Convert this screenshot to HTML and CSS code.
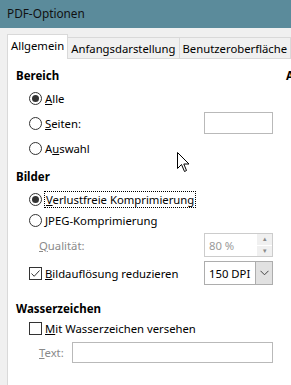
FILE: index.html
```html
<!DOCTYPE html>
<html lang="de">

<head>
    <meta charset="UTF-8">
    <meta name="viewport" content="width=device-width, initial-scale=1.0">
    <title>PDF-Optionen</title>
    <link rel="stylesheet" href="styles.css">
</head>

<body>
    <div class="window">
        <header class="titlebar">PDF-Optionen</header>

        <nav class="tabs">
            <div class="tab active">Allgemein</div>
            <div class="tab">Anfangsdarstellung</div>
            <div class="tab">Benutzeroberfläche</div>
            <div class="tab">Verknüpfungen</div>
        </nav>

        <main class="panel">
            <section class="col">
                <h2 class="heading">Bereich</h2>
                <div class="row r-alle">
                    <label class="opt"><span class="radio on"></span><span><u>A</u>lle</span></label>
                </div>
                <div class="row r-seiten">
                    <label class="opt"><span class="radio"></span><span><u>S</u>eiten:</span></label>
                    <div class="field"></div>
                </div>
                <div class="row r-auswahl">
                    <label class="opt"><span class="radio"></span><span>A<u>u</u>swahl</span></label>
                </div>

                <h2 class="heading h-bilder">Bilder</h2>
                <div class="row r-verlust">
                    <label class="opt"><span class="radio on"></span><span class="focus"><u>V</u>erlustfreie Komprimierung</span></label>
                </div>
                <div class="row r-jpeg">
                    <label class="opt"><span class="radio"></span><span><u>J</u>PEG-Komprimierung</span></label>
                </div>
                <div class="row r-qual">
                    <span class="sub disabled"><u>Q</u>ualität:</span>
                    <div class="field spin">
                        <span class="value">80 %</span>
                        <span class="spin-btns">
                            <span class="spin-btn">&#9652;</span>
                            <span class="spin-btn">&#9662;</span>
                        </span>
                    </div>
                </div>
                <div class="row r-aufl">
                    <label class="opt"><span class="check on">
                        <svg width="11" height="11" viewBox="0 0 11 11"><path d="M1.5 5.5 L4.2 8.3 L9.5 2.5" fill="none" stroke="#333" stroke-width="1"/></svg>
                    </span><span><u>B</u>ildauflösung reduzieren</span></label>
                    <div class="field combo">
                        <span class="value">150 DPI</span>
                        <span class="drop">
                            <svg width="9" height="6" viewBox="0 0 9 6"><path d="M0.5 0.8 L4.5 4.8 L8.5 0.8" fill="none" stroke="#444" stroke-width="1"/></svg>
                        </span>
                    </div>
                </div>

                <h2 class="heading h-wasser">Wasserzeichen</h2>
                <div class="row r-mit">
                    <label class="opt"><span class="check"></span><span><u>M</u>it Wasserzeichen versehen</span></label>
                </div>
                <div class="row r-text">
                    <span class="sub disabled"><u>T</u>ext:</span>
                    <div class="field wide"></div>
                </div>
            </section>

            <section class="col col2">
                <h2 class="heading">Allgemein</h2>
            </section>
        </main>

        <!-- mouse pointer in the screenshot -->
        <svg class="cursor" width="13" height="21" viewBox="0 0 13 21">
            <path d="M0.5 0.5 L0.5 16.5 L4.5 12.5 L7.5 19.5 L9.5 18.5 L6.8 12 L12 12 Z" fill="#fff" stroke="#000" stroke-width="1"/>
        </svg>
    </div>
</body>

</html>
```

FILE: styles.css
```css
body {
    margin: 0;
    padding: 0;
    background-color: #f0f0f0;
    font-family: "Noto Sans", "Open Sans", sans-serif;
    font-size: 11.3px;
    color: #000;
    overflow: hidden;
}

.window {
    position: relative;
    width: 291px;
    height: 385px;
    overflow: hidden;
}

.titlebar {
    height: 28px;
    line-height: 26px;
    padding-left: 7px;
    font-size: 11.8px;
    background-color: #5b8b9b;
    color: #111;
}

.tabs {
    display: flex;
    align-items: flex-end;
    height: 30px;
    padding-left: 7px;
    white-space: nowrap;
}

.tab {
    height: 20px;
    line-height: 22px;
    padding: 0 3px;
    border: 1px solid #d9d9d9;
    border-bottom: none;
    margin-left: -1px;
    background-color: #f0f0f0;
}

.tab.active {
    height: 24px;
    line-height: 22px;
    margin-left: 0;
    margin-bottom: -1px;
    background-color: #fff;
    position: relative;
    z-index: 1;
}

.panel {
    display: grid;
    grid-template-columns: 278px 200px;
    margin-left: 7px;
    height: 330px;
    background-color: #fff;
    border-top: 1px solid #d9d9d9;
    border-left: 1px solid #d9d9d9;
    white-space: nowrap;
}

.col {
    display: flex;
    flex-direction: column;
    padding: 7px 13px 0 8px;
}

.col2 {
    padding-left: 0;
}

.heading {
    margin: 0;
    height: 20px;
    line-height: 20px;
    font-size: 11.5px;
    font-weight: bold;
}

.h-bilder {
    margin-top: 7px;
    height: 21px;
}

.h-wasser {
    margin-top: 14px;
}

.row {
    display: flex;
    align-items: center;
    justify-content: space-between;
    padding-left: 13px;
}

.r-alle { height: 24px; }
.r-seiten { height: 26px; }
.r-auswahl { height: 24px; }
.r-verlust { height: 22px; }
.r-jpeg { height: 20px; }
.r-qual { height: 30px; }
.r-aufl { height: 24px; margin-top: 1px; }
.r-mit { height: 20px; margin-top: -1px; }
.r-text { height: 21px; margin-top: 4px; }

.opt {
    display: flex;
    align-items: center;
    gap: 3px;
}

.radio {
    width: 11px;
    height: 11px;
    border: 1px solid #333;
    border-radius: 50%;
    background-color: #fff;
    position: relative;
}

.radio.on::after {
    content: "";
    position: absolute;
    left: 2px;
    top: 2px;
    width: 7px;
    height: 7px;
    border-radius: 50%;
    background-color: #333;
}

.check {
    width: 11px;
    height: 11px;
    border: 1px solid #333;
    background-color: #fff;
    display: flex;
}

.focus {
    outline: 1px dotted #000;
    outline-offset: 0;
    padding: 0 1px;
}

.sub {
    padding-left: 10px;
}

.disabled {
    color: #8a8a8a;
}

.field {
    box-sizing: border-box;
    width: 69px;
    height: 22px;
    border: 1px solid #b9b9b9;
    background-color: #fff;
    display: flex;
    align-items: center;
}

.field.wide {
    flex: 1;
    margin-left: 8px;
    height: 21px;
}

.spin {
    height: 24px;
    border-color: #cccccc;
}

.combo {
    height: 24px;
    border-color: #adadad;
}

.value {
    flex: 1;
    padding-left: 4px;
}

.spin .value {
    color: #9a9a9a;
}

.spin-btns {
    display: flex;
    flex-direction: column;
    width: 15px;
    height: 22px;
    gap: 1px;
}

.spin-btn {
    flex: 1;
    background-color: #f0f0f0;
    color: #8a8a8a;
    font-size: 7px;
    line-height: 10px;
    text-align: center;
}

.drop {
    width: 16px;
    height: 22px;
    background-color: #e1e1e1;
    border-left: 1px solid #adadad;
    display: flex;
    align-items: center;
    justify-content: center;
}

.cursor {
    position: absolute;
    left: 177px;
    top: 152px;
}
```
